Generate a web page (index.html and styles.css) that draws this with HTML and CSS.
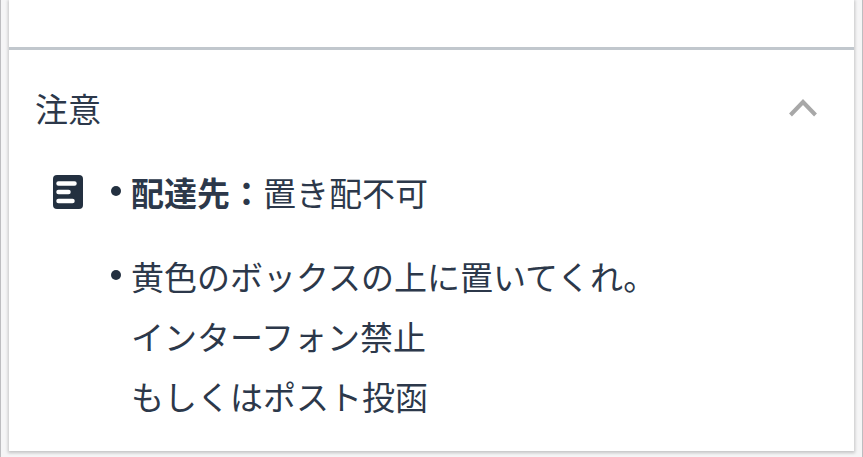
FILE: index.html
```
<!DOCTYPE html>
<html lang="ja">
<head>
    <meta charset="UTF-8">
    <meta name="viewport" content="width=device-width, initial-scale=1.0">
    <title>注意</title>
    <link rel="stylesheet" href="styles.css">
</head>
<body>
    <main class="card">
        <div class="card-top"></div>

        <section class="notice">
            <header class="notice-header">
                <h2 id="notice-title">注意</h2>
                <button class="toggle" type="button" aria-expanded="true" aria-labelledby="notice-title">
                    <svg width="30" height="20" viewBox="0 0 30 20" fill="none" aria-hidden="true">
                        <path d="M2.5 17 L15 4 L27.500 17" stroke="#a8a8a8" stroke-width="4"/>
                    </svg>
                </button>
            </header>

            <div class="notice-body">
                <svg class="note-icon" width="30" height="34" viewBox="0 0 30 34" aria-hidden="true">
                    <rect width="30" height="34" rx="4" fill="#233040"/>
                    <path d="M5.500 8.500H21.500M5.500 17H15.500M5.500 26H19.500" stroke="#fff" stroke-width="4.500" stroke-linecap="round"/>
                </svg>
                <ul class="notes">
                    <li><strong>配達先：</strong>置き配不可</li>
                    <li>黄色のボックスの上に置いてくれ。<br>インターフォン禁止<br>もしくはポスト投函</li>
                </ul>
            </div>
        </section>
    </main>
</body>
</html>
```
FILE: styles.css
```
* {
    box-sizing: border-box;
}

body {
    margin: 0;
    padding: 0 8px 6px;
    min-height: 100vh;
    display: flex;
    border: solid #bdbdc0;
    border-width: 0 1px;
    background: #f5f5f6;
    color: #2c384a;
    font-family: "Noto Sans CJK JP", sans-serif;
    font-size: 33px;
    line-height: 60px;
}

.card {
    flex: 1;
    background: #fff;
    box-shadow: 0 1px 3px 1px rgba(0, 0, 0, 0.2);
}

.card-top {
    height: 50px;
    border-bottom: 3px solid #c1c7cd;
}

.notice {
    padding: 28px 32px 24px 26px;
}

.notice-header {
    display: flex;
    align-items: center;
    justify-content: space-between;
    margin-bottom: 24px;
}

.notice-header h2 {
    margin: 0;
    font-size: 33px;
    font-weight: 400;
}

.toggle {
    display: flex;
    padding: 4px;
    border: 0;
    background: none;
    cursor: pointer;
}

.notice-body {
    display: flex;
    align-items: flex-start;
    gap: 26px;
    padding-left: 18px;
}

.note-icon {
    flex: none;
    margin-top: 13px;
}

.notes {
    display: flex;
    flex-direction: column;
    gap: 24px;
    margin: 0;
    padding: 0;
    list-style: none;
}

.notes li {
    display: flow-root;
    padding-left: 22px;
}

/* round bullet, hung left of the text */
.notes li::before {
    content: "";
    float: left;
    width: 10px;
    height: 10px;
    margin: 24px 0 0 -20px;
    border-radius: 50%;
    background: #233040;
}
```
